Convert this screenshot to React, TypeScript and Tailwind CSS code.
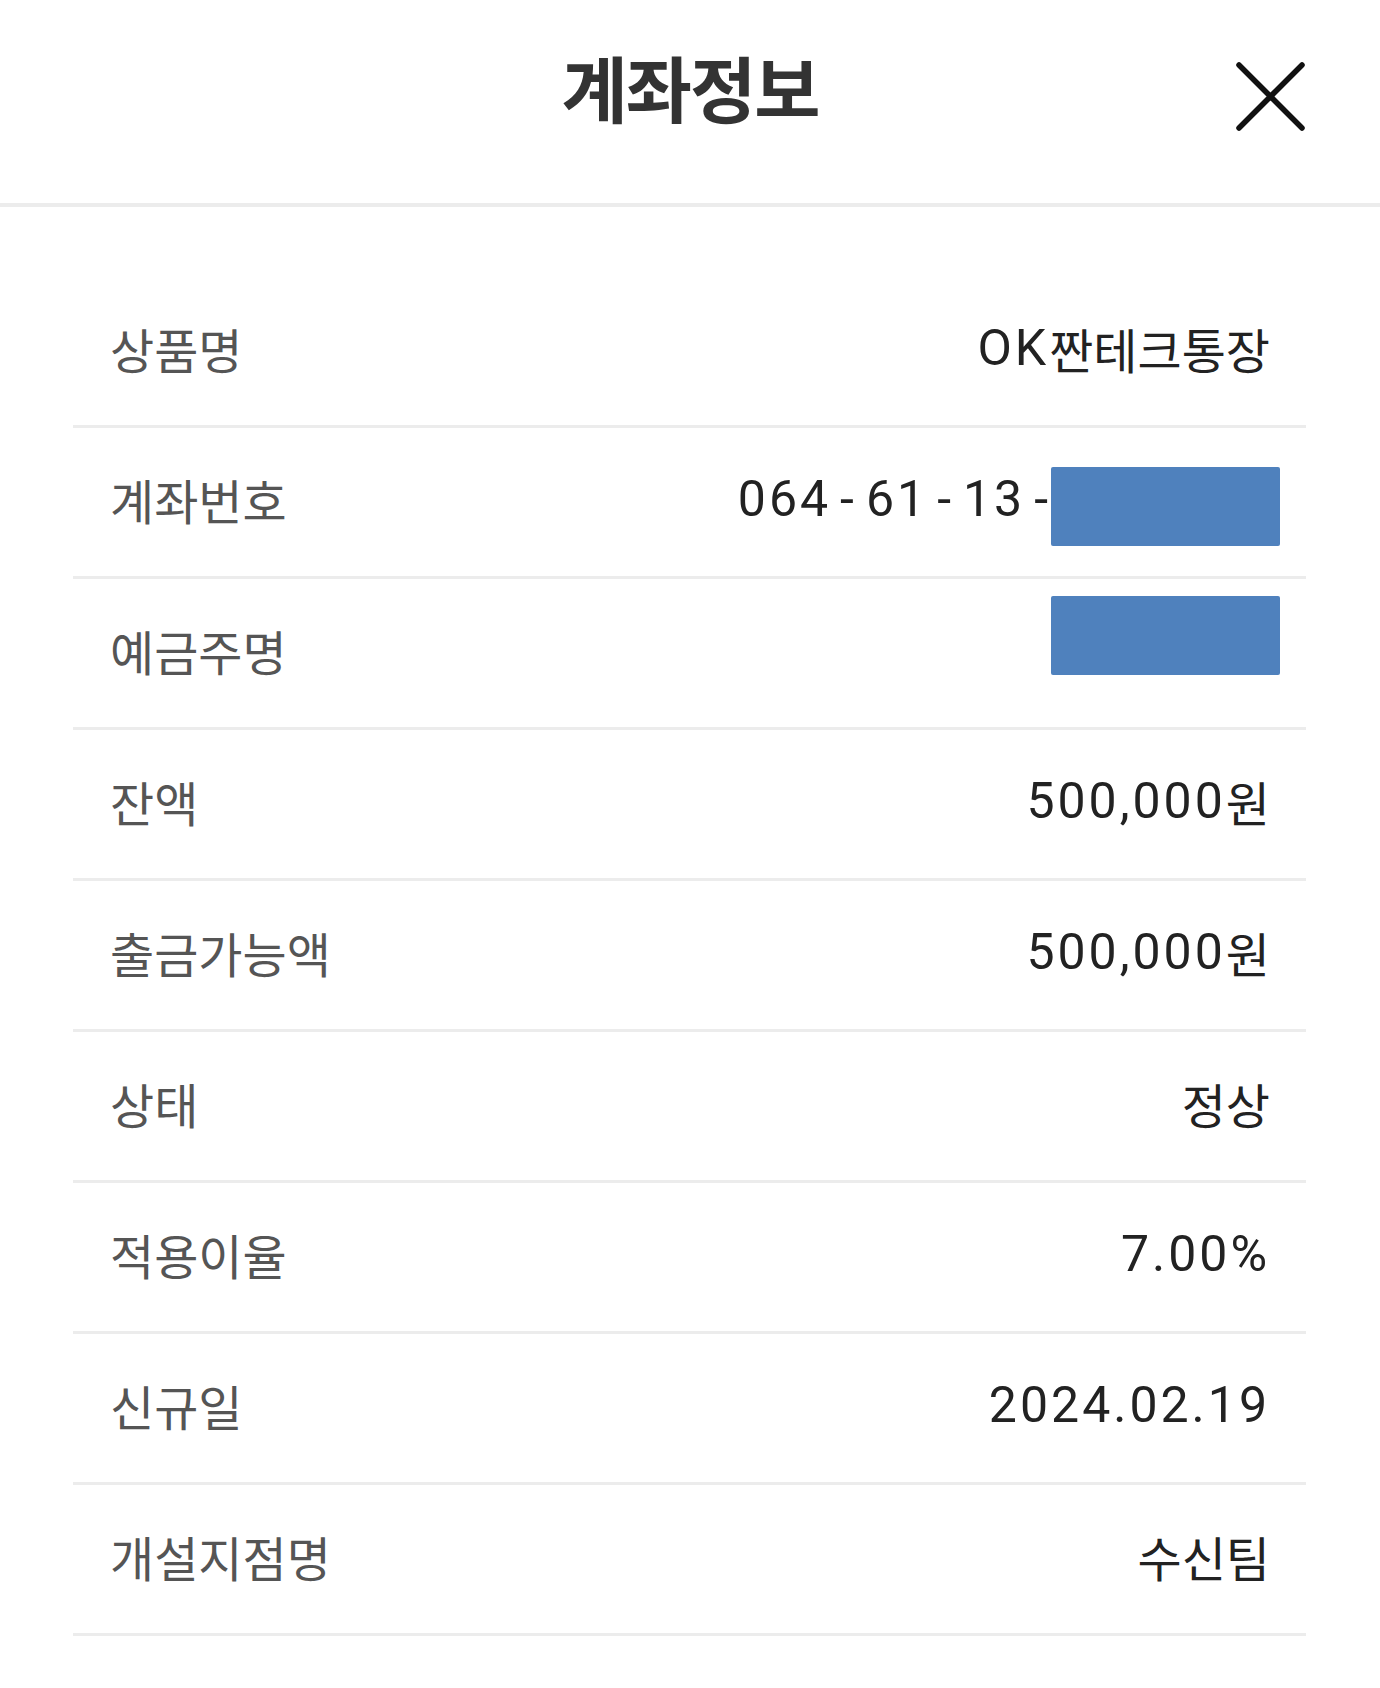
const rows: { label: string; value?: string; masked?: "tail" | "only" }[] = [
  { label: "상품명", value: "OK짠테크통장" },
  { label: "계좌번호", value: "064-61-13-", masked: "tail" },
  { label: "예금주명", masked: "only" },
  { label: "잔액", value: "500,000원" },
  { label: "출금가능액", value: "500,000원" },
  { label: "상태", value: "정상" },
  { label: "적용이율", value: "7.00%" },
  { label: "신규일", value: "2024.02.19" },
  { label: "개설지점명", value: "수신팀" },
];

const kr = { fontFamily: '"Noto Sans CJK KR", "Noto Sans", sans-serif' };
const num = { fontFamily: 'Roboto, "Noto Sans CJK KR", sans-serif' };

const Mask = ({ className }: { className: string }) => (
  <span className={`inline-block w-[229px] h-[79px] bg-[#4f81bd] rounded-[2px] ${className}`} />
);

// latin/digit runs use Roboto, hangul runs use Noto
const Value = ({ text }: { text: string }) => {
  const parts = text.split(/([\u0000-\u007f]+)/).filter(Boolean);
  return (
    <>
      {parts.map((part, i) =>
        /^[\u0000-\u007f]+$/.test(part) ? (
          <span key={i} className="text-[50px] tracking-[3px]" style={num}>
            {part.split(/(-)/).map((bit, j) =>
              bit === "-" ? (
                <span key={j} className="mx-[9px]">
                  -
                </span>
              ) : (
                bit
              )
            )}
          </span>
        ) : (
          <span key={i} className="text-[48px] tracking-[0px]" style={kr}>
            {part}
          </span>
        )
      )}
    </>
  );
};

const App = () => {
  return (
    <div className="w-full min-h-screen bg-white">
      <div className="relative h-[207px] flex justify-center border-b-[4px] border-[#ececec]">
        <h1
          className="pt-[50px] text-[72px] leading-none font-bold tracking-[-2px] text-[#333]"
          style={kr}
        >
          계좌정보
        </h1>
        <button className="absolute right-[75px] top-[62px] w-[69px] h-[69px]">
          <svg viewBox="0 0 69 69" className="w-full h-full">
            <path
              d="M3 3 L66 66 M66 3 L3 66"
              stroke="#111"
              strokeWidth="5.5"
              strokeLinecap="round"
              fill="none"
            />
          </svg>
        </button>
      </div>

      <div className="ml-[73px] mr-[74px] pt-[70px]">
        {rows.map((row, key) => (
          <div
            key={key}
            className="h-[151px] flex items-center justify-between pl-[37px] pr-[39px] pb-[6px] border-b-[3px] border-[#ececec]"
          >
            <span
              className="text-[48px] leading-none tracking-[0px] text-[#555]"
              style={kr}
            >
              {row.label}
            </span>
            <span className="flex items-center leading-none text-[#222] mr-[-3px]">
              {row.value && <Value text={row.value} />}
              {row.masked === "tail" && <Mask className="ml-[-9px] mr-[-10px] mt-[14px]" />}
              {row.masked === "only" && <Mask className="mr-[-10px] mt-[-30px]" />}
            </span>
          </div>
        ))}
      </div>
    </div>
  );
};

export default App;
